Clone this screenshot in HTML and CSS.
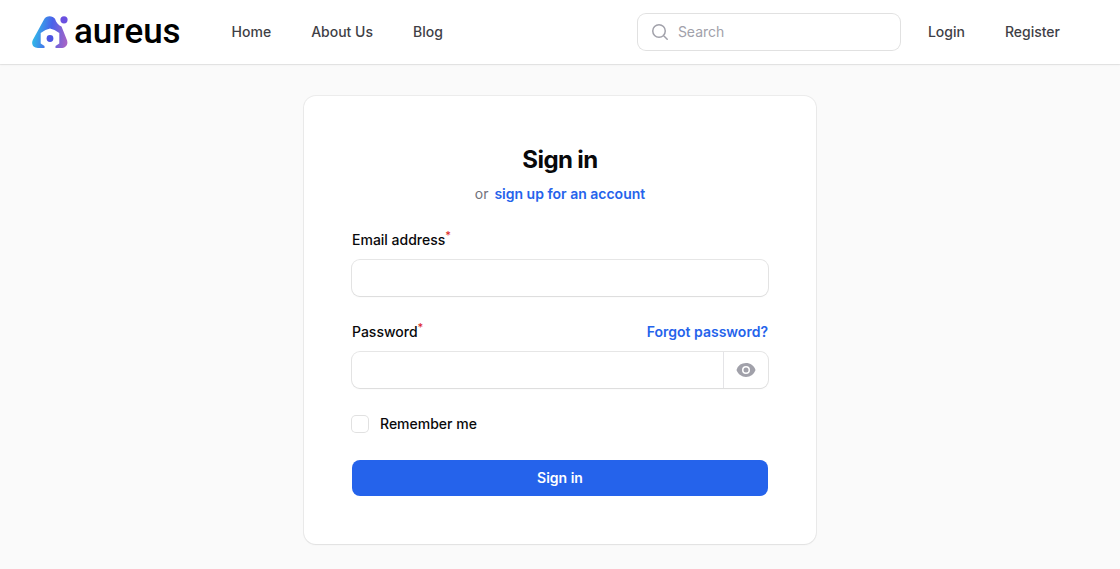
FILE: index.html
```html
<!DOCTYPE html>
<html lang="en">
<head>
  <meta charset="utf-8">
  <meta name="viewport" content="width=device-width, initial-scale=1">
  <title>Sign in - Aureus</title>
  <link rel="stylesheet" href="styles.css">
</head>
<body>
  <header class="topbar">
    <a class="brand" href="#">
      <svg class="brand-mark" viewBox="0 0 36 32" width="36" height="32" aria-hidden="true">
        <defs>
          <linearGradient id="mark" x1="0" y1="0.6" x2="1" y2="0.75">
            <stop offset="0" stop-color="#2fbfe8"/>
            <stop offset="0.5" stop-color="#4a62ea"/>
            <stop offset="1" stop-color="#a964c4"/>
          </linearGradient>
        </defs>
        <path fill="url(#mark)" d="M12 3.500C14-.6 20.500-.8 23 2.800C24 7 27 9.500 29.500 10.500L34.500 23C37 28 34 32 29 32H23.500V30L27.300 27.500V17L22.500 14L18 12.500L13.500 14L8.700 17V27.500L12.500 30V32H6C1 32-1 28 .8 24Z"/>
        <circle cx="32" cy="3.800" r="3.600" fill="#6a50e0"/>
        <circle cx="18" cy="22.500" r="3.400" fill="#4c55e2"/>
      </svg>
      <span class="brand-name">aureus</span>
    </a>
    <nav class="nav">
      <a href="#">Home</a>
      <a href="#">About Us</a>
      <a href="#">Blog</a>
    </nav>
    <div class="tools">
      <label class="search">
        <svg viewBox="0 0 20 20" width="20" height="20" aria-hidden="true">
          <path fill="none" stroke="currentColor" stroke-width="1.500" stroke-linecap="round" d="M13.200 13.200L17.200 17.200M15.250 9A6.250 6.250 0 1 1 2.750 9A6.250 6.250 0 0 1 15.250 9Z"/>
        </svg>
        <input type="search" placeholder="Search" aria-label="Search">
      </label>
      <nav class="nav">
        <a href="#">Login</a>
        <a href="#">Register</a>
      </nav>
    </div>
  </header>

  <main class="page">
    <section class="card">
      <h1>Sign in</h1>
      <p class="subheading">or <a class="link" href="#">sign up for an account</a></p>
      <form class="form">
        <div class="field">
          <label for="email">Email address<sup>*</sup></label>
          <div class="input-wrap">
            <input id="email" type="email" required>
          </div>
        </div>
        <div class="field">
          <div class="label-row">
            <label for="password">Password<sup>*</sup></label>
            <a class="link" href="#">Forgot password?</a>
          </div>
          <div class="input-wrap">
            <input id="password" type="password" required>
            <button class="reveal" type="button" aria-label="Show password">
              <svg viewBox="0 0 20 20" width="20" height="20" aria-hidden="true">
                <path fill="currentColor" d="M10 12.500a2.500 2.500 0 1 0 0-5 2.500 2.500 0 0 0 0 5Z"/>
                <path fill="currentColor" fill-rule="evenodd" d="M.664 10.590a1.651 1.651 0 0 1 0-1.186A10.004 10.004 0 0 1 10 3c4.257 0 7.893 2.660 9.336 6.410.147.381.146.804 0 1.186A10.004 10.004 0 0 1 10 17c-4.257 0-7.893-2.660-9.336-6.410ZM14 10a4 4 0 1 1-8 0 4 4 0 0 1 8 0Z"/>
              </svg>
            </button>
          </div>
        </div>
        <label class="remember"><input type="checkbox"> Remember me</label>
        <button class="submit" type="submit">Sign in</button>
      </form>
    </section>
  </main>
</body>
</html>
```

FILE: styles.css
```css
* {
  box-sizing: border-box;
}
body {
  margin: 0;
  background: #fafafa;
  color: #09090b;
  font-family: Inter, sans-serif;
  font-size: 14px;
  line-height: 24px;
}
a {
  text-decoration: none;
}
input,
button {
  font: inherit;
  color: inherit;
}

/* top bar */
.topbar {
  display: flex;
  align-items: center;
  height: 64px;
  padding: 0 48px 0 32px;
  background: #fff;
  box-shadow: 0 0 0 1px rgba(9, 9, 11, 0.06), 0 1px 2px rgba(0, 0, 0, 0.06);
}
.brand {
  display: flex;
  align-items: center;
  gap: 6px;
  color: #000;
}
.brand-name {
  font-family: Roboto, sans-serif;
  font-size: 35px;
  font-weight: 500;
  line-height: 34px;
}
.nav {
  display: flex;
  gap: 16px;
}
.brand + .nav {
  margin-left: 39px;
}
.nav a {
  padding: 0 12px;
  color: #3f3f46;
  font-weight: 500;
}
.tools {
  display: flex;
  align-items: center;
  gap: 16px;
  margin-left: auto;
}
.search {
  display: flex;
  align-items: center;
  gap: 8px;
  width: 262px;
  height: 36px;
  padding: 0 12px;
  border-radius: 8px;
  color: #a1a1aa;
  box-shadow: 0 0 0 1px rgba(9, 9, 11, 0.12);
}
.search svg {
  flex: none;
}
.search input {
  flex: 1;
  min-width: 0;
  padding: 0;
  border: 0;
  outline: 0;
  background: none;
}
.search input::placeholder {
  color: #a1a1aa;
  opacity: 1;
}

/* sign in card */
.page {
  display: flex;
  justify-content: center;
  padding: 32px 16px 24px;
}
.card {
  width: 100%;
  max-width: 512px;
  padding: 48px;
  border-radius: 12px;
  background: #fff;
  box-shadow: 0 0 0 1px rgba(9, 9, 11, 0.06), 0 1px 2px rgba(0, 0, 0, 0.05);
}
h1 {
  margin: 0;
  font-size: 24px;
  line-height: 32px;
  letter-spacing: -0.025em;
  text-align: center;
}
.subheading {
  margin: 8px 0 24px;
  color: #71717a;
  line-height: 20px;
  text-align: center;
}
.link {
  color: #2563eb;
  font-weight: 600;
}
.subheading .link {
  margin-left: 2px;
}
.form {
  display: flex;
  flex-direction: column;
  gap: 24px;
}
.field {
  display: flex;
  flex-direction: column;
  gap: 8px;
}
.field label,
.remember {
  font-weight: 500;
}
.label-row {
  display: flex;
  justify-content: space-between;
}
sup {
  color: #dc2626;
  font-size: 11px;
  line-height: 0;
}
.input-wrap {
  display: flex;
  height: 36px;
  border-radius: 8px;
  box-shadow: 0 0 0 1px rgba(9, 9, 11, 0.1), 0 1px 2px rgba(0, 0, 0, 0.05);
}
.input-wrap input {
  flex: 1;
  min-width: 0;
  padding: 0 12px;
  border: 0;
  outline: 0;
  background: none;
}
.reveal {
  display: flex;
  align-items: center;
  padding: 0 12px;
  border: 0;
  border-left: 1px solid #e4e4e7;
  background: none;
  color: #a1a1aa;
  cursor: pointer;
}
.remember {
  display: flex;
  align-items: center;
  gap: 12px;
}
.remember input {
  appearance: none;
  width: 16px;
  height: 16px;
  margin: 0;
  border-radius: 4px;
  box-shadow: 0 0 0 1px rgba(9, 9, 11, 0.12);
}
.remember input:checked {
  background: #2563eb;
}
.submit {
  height: 36px;
  border: 0;
  border-radius: 8px;
  background: #2563eb;
  color: #fff;
  font-weight: 600;
  cursor: pointer;
}
.submit:hover {
  background: #3b82f6;
}
```
